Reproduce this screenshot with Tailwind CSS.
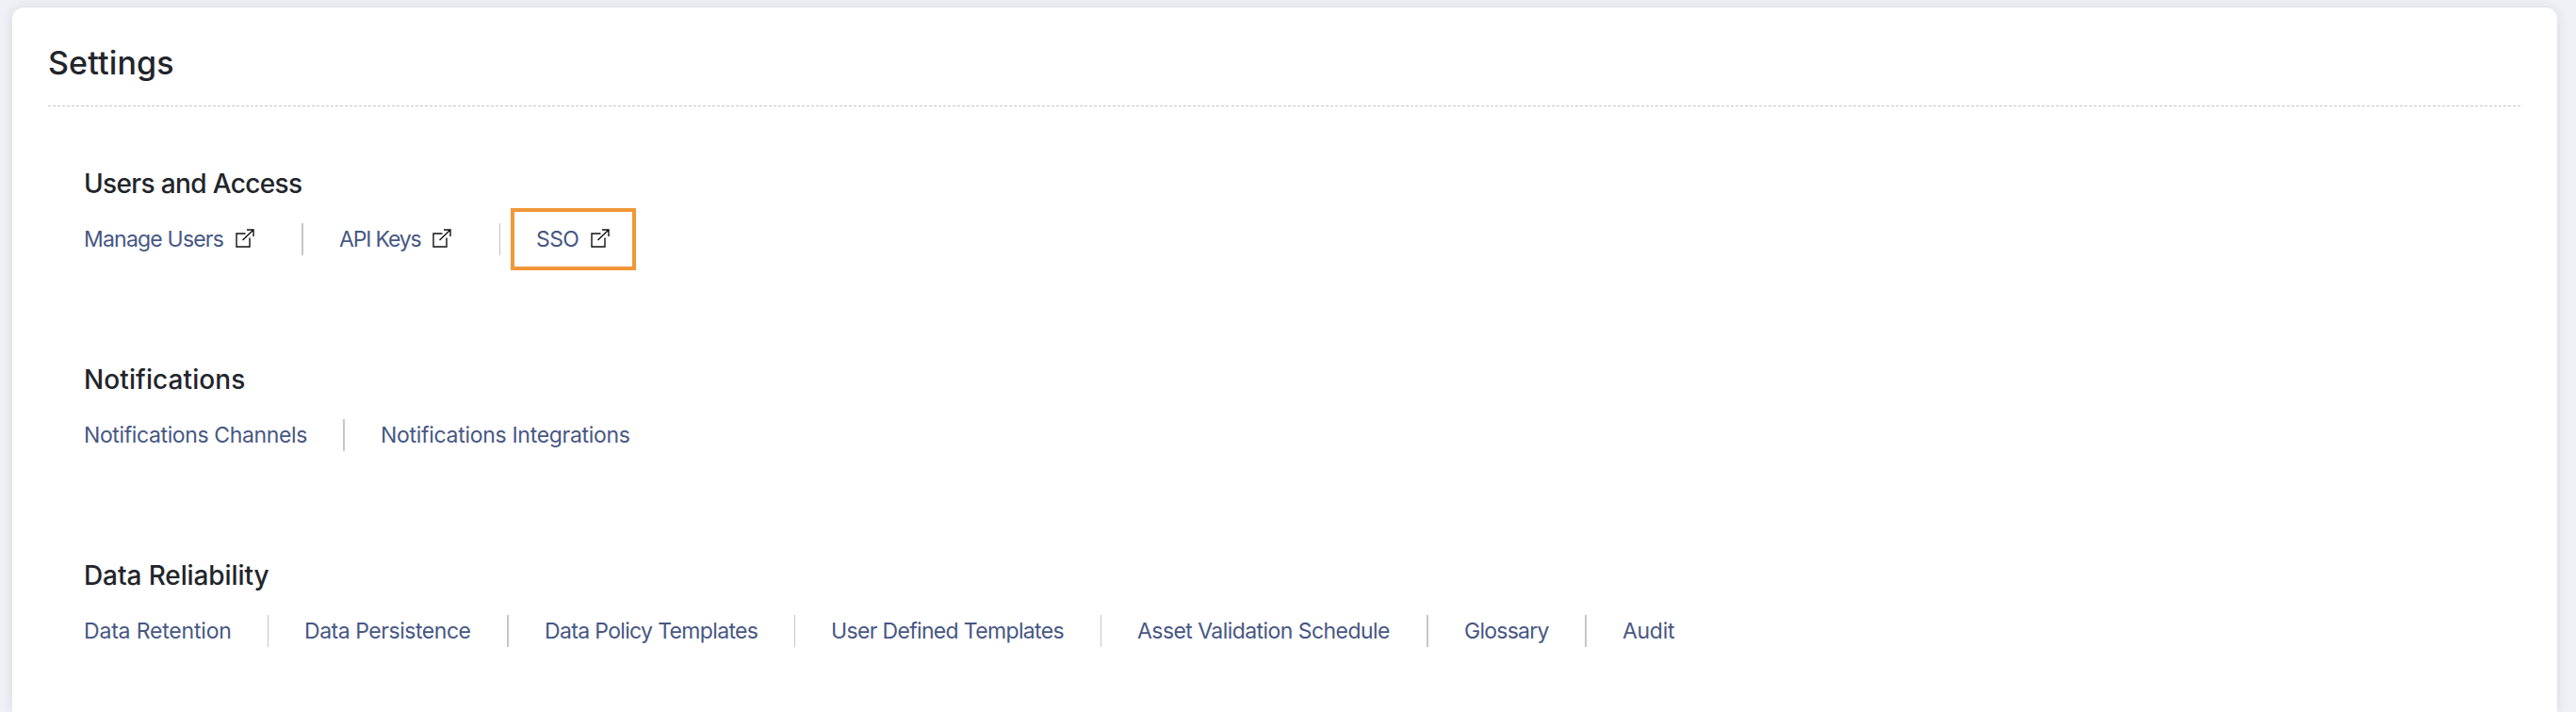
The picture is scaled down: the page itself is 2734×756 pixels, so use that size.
<!DOCTYPE html>
<html lang="en">
<head>
<meta charset="utf-8">
<title>Settings</title>
<script src="https://cdn.jsdelivr.net/npm/@tailwindcss/browser@4"></script>
</head>
<body class="h-[756px] overflow-hidden bg-[#f0f1f6] font-['Inter',sans-serif] text-[#22252b]">
<svg class="hidden"><symbol id="ext" viewBox="0 0 20 20"><path d="M10.5 5H1v14h14V9.5M7.5 12 19 .9M12 1h7v7" fill="none" stroke="#111" stroke-width="1.4"/></symbol></svg>
<div class="flex h-full overflow-hidden pt-2 pl-[13px]">
<main class="h-[748px] w-[2701px] shrink-0 rounded-t-xl bg-white px-[38px] shadow-[0_0_14px_rgba(40,40,50,0.11)]">
  <h1 class="h-[104px] pt-[36px] text-[34px] leading-[46px] font-medium tracking-[0.15px]">Settings</h1>
  <div class="h-px w-[2624px] bg-[repeating-linear-gradient(90deg,#c6c6c6_0_3px,transparent_3px_5.002px)]"></div>
  <div class="pl-[38px]">
    <section class="h-[208px] pt-[62px]">
      <h2 class="h-[62px] text-[28px] leading-10 font-medium tracking-[-0.65px]">Users and Access</h2>
      <nav class="flex h-[34px] text-[23px] leading-[34px] whitespace-nowrap text-[#475783]">
        <a class="flex w-[233px] items-center border-r-2 border-[#c6c6c6]"><span class="w-[161px] tracking-[-0.8px]">Manage Users</span><svg class="-mt-[3px] size-5"><use href="#ext"/></svg></a>
        <a class="flex w-[209px] items-center border-r border-[#c6c6c6] pl-[38px]"><span class="w-[99px] tracking-[-1.15px]">API Keys</span><svg class="-mt-[3px] size-5"><use href="#ext"/></svg></a>
        <a class="-my-4 ml-[11px] flex w-[133px] items-center border-4 border-[#f19737] pl-[23px]"><span class="w-[58px] tracking-[-0.6px]">SSO</span><svg class="-mt-[3px] size-5"><use href="#ext"/></svg></a>
      </nav>
    </section>
    <section class="h-[208px] pt-[62px]">
      <h2 class="h-[62px] text-[28px] leading-10 font-medium tracking-[0.1px]">Notifications</h2>
      <nav class="flex h-[34px] text-[23px] leading-[34px] whitespace-nowrap text-[#475783]">
        <a class="w-[277px] border-r-2 border-[#c6c6c6] tracking-[-0.38px]">Notifications Channels</a>
        <a class="pl-[38px] tracking-[-0.3px]">Notifications Integrations</a>
      </nav>
    </section>
    <section class="h-[208px] pt-[62px]">
      <h2 class="h-[62px] text-[28px] leading-10 font-medium tracking-[-0.1px]">Data Reliability</h2>
      <nav class="flex h-[34px] text-[23px] leading-[34px] whitespace-nowrap text-[#475783]">
        <a class="w-[196px] border-r border-[#c6c6c6] tracking-[-0.18px]">Data Retention</a>
        <a class="w-[255px] border-r-2 border-[#c6c6c6] pl-[38px] tracking-[-0.46px]">Data Persistence</a>
        <a class="w-[304px] border-r border-[#c6c6c6] pl-[38px] tracking-[-0.66px]">Data Policy Templates</a>
        <a class="w-[325px] border-r border-[#c6c6c6] pl-[38px] tracking-[-0.66px]">User Defined Templates</a>
        <a class="w-[347px] border-r-2 border-[#c6c6c6] pl-[38px] tracking-[-0.56px]">Asset Validation Schedule</a>
        <a class="w-[168px] border-r-2 border-[#c6c6c6] pl-[38px] tracking-[-0.75px]">Glossary</a>
        <a class="pl-[38px] tracking-[-0.3px]">Audit</a>
      </nav>
    </section>
  </div>
</main>
</div>
</body>
</html>
